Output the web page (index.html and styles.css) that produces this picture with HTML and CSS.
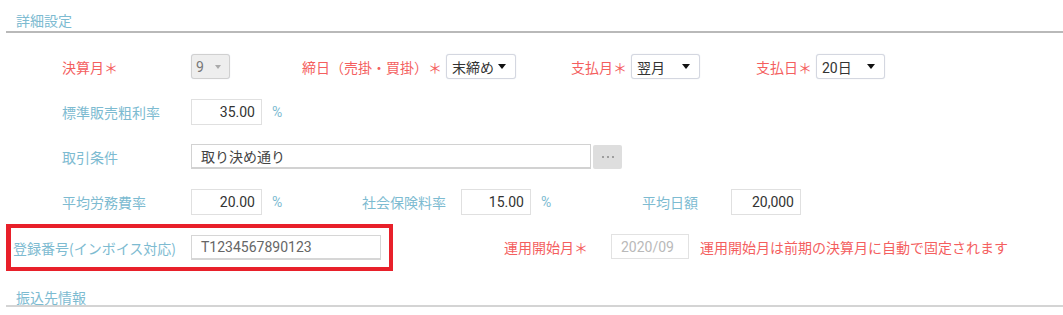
FILE: index.html
```html
<!DOCTYPE html>
<html lang="ja">
<head>
<meta charset="utf-8">
<link rel="stylesheet" href="styles.css">
</head>
<body>
<div class="page">
  <div class="section-head">詳細設定</div>

  <div class="rows">
    <div class="row">
      <div class="label req">決算月＊</div>
      <div class="select disabled w39"><span>9</span><i class="caret"></i></div>
      <div class="field gap72">
        <div class="label-in req w144">締日（売掛・買掛）＊</div>
        <div class="select w70"><span>末締め</span><i class="caret"></i></div>
      </div>
      <div class="field gap55">
        <div class="label-in req w60">支払月＊</div>
        <div class="select w69"><span>翌月</span><i class="caret"></i></div>
      </div>
      <div class="field gap56">
        <div class="label-in req w60">支払日＊</div>
        <div class="select w69"><span>20日</span><i class="caret"></i></div>
      </div>
    </div>

    <div class="row">
      <div class="label">標準販売粗利率</div>
      <div class="input num w71">35.00</div>
      <div class="pct">%</div>
    </div>

    <div class="row">
      <div class="label">取引条件</div>
      <div class="input text w400">取り決め通り</div>
      <div class="more-btn"><i></i><i></i><i></i></div>
    </div>

    <div class="row">
      <div class="label">平均労務費率</div>
      <div class="input num w71">20.00</div>
      <div class="pct">%</div>
      <div class="field gap70">
        <div class="label-in w99">社会保険料率</div>
        <div class="input num w70">15.00</div>
        <div class="pct">%</div>
      </div>
      <div class="field gap81">
        <div class="label-in w89">平均日額</div>
        <div class="input num w70">20,000</div>
      </div>
    </div>

    <div class="row row-last">
      <div class="highlight">
        <div class="label-hl">登録番号(インボイス対応)</div>
        <div class="input text gray w190">T1234567890123</div>
      </div>
      <div class="field gap111">
        <div class="label-in req w107">運用開始月＊</div>
        <div class="input text disabled-in w78">2020/09</div>
        <div class="note">運用開始月は前期の決算月に自動で固定されます</div>
      </div>
    </div>
  </div>

  <div class="section-foot">振込先情報</div>
</div>
</body>
</html>
```

FILE: styles.css
```css
* { box-sizing: border-box; }
html, body { margin: 0; padding: 0; background: #fff; }
body {
  font-family: "Noto Sans CJK JP", "Noto Sans", sans-serif;
  font-size: 14px;
  color: #333;
  width: 1063px;
  height: 315px;
  overflow: hidden;
}
.page { padding: 0; }

.section-head {
  margin-left: 6px;
  padding: 10px 0 0 10px;
  height: 33px;
  line-height: 21px;
  color: #7dbbd1;
  border-bottom: 2px solid #b9b9b9;
}

.rows { margin-top: 11px; }
.row {
  display: flex;
  align-items: center;
  height: 45px;
  padding-left: 62px;
}
.label {
  width: 129px;
  color: #7dbbd1;
  white-space: nowrap;
}
.label-in {
  color: #7dbbd1;
  white-space: nowrap;
}
.req { color: #f45f5f; }
.field { display: flex; align-items: center; }

.gap72 { margin-left: 72px; }
.gap55 { margin-left: 55px; }
.gap56 { margin-left: 56px; }
.gap70 { margin-left: 70px; }
.gap81 { margin-left: 81px; }
.gap111 { margin-left: 111px; }

.w39 { width: 39px; }
.w60 { width: 60px; }
.w69 { width: 69px; }
.w70 { width: 70px; }
.w71 { width: 71px; }
.w78 { width: 78px; }
.w89 { width: 89px; }
.w99 { width: 99px; }
.w107 { width: 107px; }
.w144 { width: 144px; }
.w190 { width: 190px; }
.w400 { width: 400px; }

.select {
  height: 25px;
  display: flex;
  align-items: center;
  justify-content: space-between;
  padding: 0 9px 0 5px;
  background: #fff;
  border: 1px solid #d4d7e0;
  border-radius: 3px;
  box-shadow: 0 0 1px rgba(150, 160, 190, 0.4);
  font-family: "Roboto", "Noto Sans CJK JP", sans-serif;
  color: #333;
}
.caret {
  width: 0;
  height: 0;
  border-left: 4px solid transparent;
  border-right: 4px solid transparent;
  border-top: 5px solid #111;
}
.select.disabled {
  background: #eeeeee;
  border-color: #d0d0d0;
  color: #777;
  padding: 0 8px 0 4px;
}
.select.disabled .caret { border-top-color: #aaa; border-left-width: 3px; border-right-width: 3px; border-top-width: 4px; }

.input {
  height: 26px;
  display: flex;
  align-items: center;
  background: #fff;
  border: 1px solid #e0e0e0;
  font-family: "Roboto", "Noto Sans CJK JP", sans-serif;
  color: #333;
  white-space: nowrap;
}
.input.num { justify-content: flex-end; padding-right: 6px; }
.input.text { padding-left: 9px; height: 25px; border-color: #d2d2d2; border-width: 1px 1px 2px 1px; color: #444; }
.input.gray { color: #666; border-color: #d6d6d6; }
.input.disabled-in { color: #b9b9b9; border-color: #e2e2e2; border-width: 1px; height: 25px; }

.pct {
  width: 30px;
  padding-left: 10px;
  color: #7dbbd1;
  font-family: "Roboto", "Noto Sans", sans-serif;
}

.more-btn {
  margin-left: 2px;
  width: 29px;
  height: 24px;
  background: #dedede;
  border-radius: 2px;
  display: flex;
  align-items: center;
  justify-content: center;
  gap: 3px;
}
.more-btn i {
  width: 2px;
  height: 2px;
  background: #888;
  border-radius: 1px;
}

.row-last { padding-left: 6px; height: 45px; }
.highlight {
  display: flex;
  align-items: center;
  width: 387px;
  height: 47px;
  border: 4px solid #e8202a;
  border-left-width: 5px;
  padding-left: 2px;
  margin-top: 2px;
}
.label-hl {
  width: 178px;
  color: #7dbbd1;
  white-space: nowrap;
}
.note {
  margin-left: 11px;
  color: #f45f5f;
  white-space: nowrap;
}

.section-foot {
  margin-left: 6px;
  margin-top: 20px;
  padding-left: 10px;
  line-height: 16px;
  height: 18px;
  color: #7dbbd1;
  border-bottom: 2px solid #d4d4d4;
}
```
